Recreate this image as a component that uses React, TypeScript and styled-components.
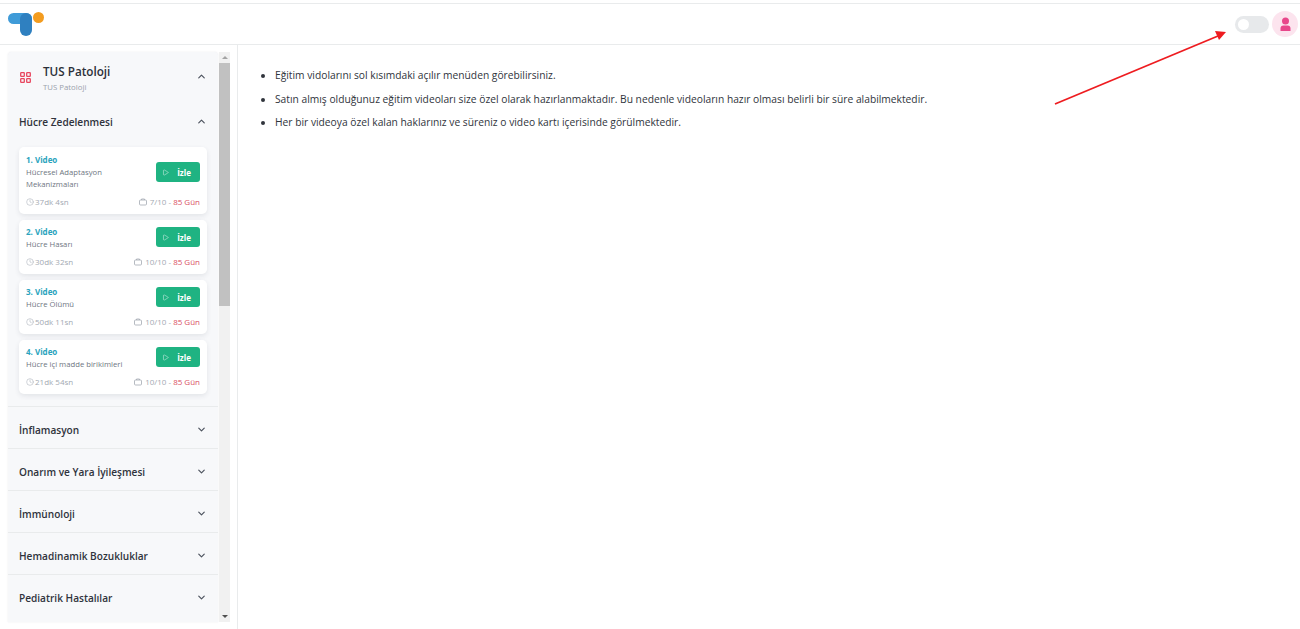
import { createGlobalStyle, styled } from 'styled-components';
import { ChevronDown, ChevronUp, Clock, Play } from 'lucide-react';

const GlobalStyle = createGlobalStyle`
  html, body {
    margin: 0;
    padding: 0;
    height: 100%;
    background: #ffffff;
    overflow: hidden;
    font-family: 'Open Sans', 'Noto Sans', sans-serif;
  }
  * {
    box-sizing: border-box;
  }
`;

const Page = styled.div`
  position: relative;
  width: 1300px;
  height: 629px;
  padding-top: 3px;
  display: flex;
  flex-direction: column;
`;

const Header = styled.header`
  height: 42px;
  flex: none;
  border-top: 1px solid #e9ebec;
  border-bottom: 1px solid #e9ebec;
  display: flex;
  align-items: center;
  justify-content: space-between;
  padding: 0 2px 0 8px;
`;

const Logo = styled.svg`
  width: 36px;
  height: 24px;
`;

const HeaderActions = styled.div`
  display: flex;
  align-items: center;
  gap: 3px;
`;

const Toggle = styled.div`
  width: 34px;
  height: 17px;
  border-radius: 9px;
  background: #e7e9eb;
  padding: 3px;
`;

const ToggleKnob = styled.div`
  width: 11px;
  height: 11px;
  border-radius: 50%;
  background: #ffffff;
`;

const Avatar = styled.div`
  width: 26px;
  height: 26px;
  border-radius: 50%;
  background: #fce4ee;
  display: flex;
  align-items: center;
  justify-content: center;
`;

const Body = styled.div`
  flex: 1;
  display: flex;
  min-height: 0;
`;

const Sidebar = styled.aside`
  width: 238px;
  flex: none;
  border-right: 1px solid #e9ebec;
  padding: 7px 6px 7px 8px;
  display: flex;
  gap: 1px;
`;

const Panel = styled.div`
  width: 210px;
  height: 100%;
  overflow: hidden;
  background: #f7f8fa;
  border-radius: 4px 4px 0 0;
  box-shadow: 0 0 2px rgba(40, 50, 70, 0.1);
`;

const CourseHead = styled.div`
  height: 51px;
  display: flex;
  align-items: flex-start;
  padding: 11px 11px 0 12px;
`;

const CourseIcon = styled.svg`
  width: 11px;
  height: 11px;
  flex: none;
  margin: 9px 12px 0 0;
`;

const CourseText = styled.div`
  flex: 1;
`;

const CourseTitle = styled.div`
  font-size: 11.7px;
  line-height: 16px;
  font-weight: 600;
  color: #2b2f38;
`;

const CourseSub = styled.div`
  font-size: 7.8px;
  line-height: 11px;
  margin-top: 3px;
  color: #9aa1ab;
`;

const SectionRow = styled.div<{ $height: number; $border?: boolean; $offset?: number }>`
  height: ${(p) => p.$height}px;
  display: flex;
  align-items: center;
  justify-content: space-between;
  padding: ${(p) => p.$offset ?? 0}px 11px 0 11px;
  font-size: 10.1px;
  font-weight: 600;
  color: #2f333c;
  border-top: ${(p) => (p.$border ? '1px solid #e9ebec' : 'none')};
`;

const Chevron = styled.span<{ $nudge?: number }>`
  color: #4d535e;
  display: flex;
  margin-top: ${(p) => p.$nudge ?? 0}px;
`;

const VideoList = styled.div`
  padding: 7px 11px 12px 11px;
  display: flex;
  flex-direction: column;
  gap: 6px;
`;

const Card = styled.div<{ $tall: boolean }>`
  height: ${(p) => (p.$tall ? 67 : 54)}px;
  background: #ffffff;
  border-radius: 5px;
  box-shadow: 0 2px 5px rgba(50, 60, 80, 0.1);
  padding: ${(p) => (p.$tall ? 7 : 6)}px 7px 0 7px;
  display: flex;
  flex-direction: column;
`;

const CardTop = styled.div`
  flex: 1;
  display: flex;
  justify-content: space-between;
  align-items: flex-start;
`;

const CardText = styled.div`
  width: 100px;
`;

const VideoNo = styled.div`
  font-size: 8px;
  line-height: 11px;
  margin-bottom: 1px;
  font-weight: 700;
  color: #2aa3bd;
`;

const VideoName = styled.div`
  font-size: 7.7px;
  line-height: 12px;
  color: #6f7682;
  white-space: nowrap;
`;

const WatchButton = styled.div<{ $tall: boolean }>`
  width: 44px;
  height: 20px;
  margin-top: ${(p) => (p.$tall ? 8 : 1)}px;
  padding-right: 3px;
  border-radius: 3px;
  background: #1fb382;
  color: #ffffff;
  display: flex;
  align-items: center;
  justify-content: center;
  gap: 8px;
  font-size: 8px;
  font-weight: 700;
`;

const CardBottom = styled.div`
  height: 17px;
  margin-bottom: 4px;
  display: flex;
  align-items: center;
  justify-content: space-between;
  font-size: 8px;
  color: #a3a9b2;
`;

const Meta = styled.span`
  display: flex;
  align-items: center;
  gap: 1px;
`;

const MetaRight = styled(Meta)`
  gap: 3px;
`;

const Days = styled.span`
  color: #d9505f;
`;

const ScrollTrack = styled.div`
  width: 11px;
  height: 100%;
  background: #f1f1f1;
  display: flex;
  flex-direction: column;
  align-items: center;
`;

const ScrollArrow = styled.div<{ $down?: boolean }>`
  height: 11px;
  flex: none;
  display: flex;
  align-items: center;
  justify-content: center;
  margin-top: ${(p) => (p.$down ? 'auto' : '0')};

  &::before {
    content: '';
    border-left: 3px solid transparent;
    border-right: 3px solid transparent;
    ${(p) => (p.$down ? 'border-top: 3px solid #505050;' : 'border-bottom: 3px solid #a3a3a3;')}
  }
`;

const ScrollThumb = styled.div`
  width: 100%;
  height: 243px;
  background: #c1c1c1;
`;

const Content = styled.main`
  flex: 1;
  padding: 23px 0 0 0;
`;

const Notes = styled.ul`
  margin: 0;
  padding: 0 0 0 37px;
  list-style: disc;
  color: #30343c;
  font-size: 10.25px;
  line-height: 14px;

  li {
    margin-bottom: 9.5px;
  }
`;

const ArrowLayer = styled.svg`
  position: absolute;
  left: 1050px;
  top: 25px;
  width: 185px;
  height: 85px;
`;

const videos = [
  { no: '1. Video', name: ['Hücresel Adaptasyon', 'Mekanizmaları'], time: '37dk 4sn', left: '7/10' },
  { no: '2. Video', name: ['Hücre Hasarı'], time: '30dk 32sn', left: '10/10' },
  { no: '3. Video', name: ['Hücre Ölümü'], time: '50dk 11sn', left: '10/10' },
  { no: '4. Video', name: ['Hücre içi madde birikimleri'], time: '21dk 54sn', left: '10/10' },
];

const sections = ['İnflamasyon', 'Onarım ve Yara İyileşmesi', 'İmmünoloji', 'Hemadinamik Bozukluklar', 'Pediatrik Hastalılar'];

const notes = [
  'Eğitim vidolarını sol kısımdaki açılır menüden görebilirsiniz.',
  'Satın almış olduğunuz eğitim videoları size özel olarak hazırlanmaktadır. Bu nedenle videoların hazır olması belirli bir süre alabilmektedir.',
  'Her bir videoya özel kalan haklarınız ve süreniz o video kartı içerisinde görülmektedir.',
];

export default function App() {
  return (
    <Page>
      <GlobalStyle />
      <Header>
        <Logo viewBox="0 0 36 24">
          <circle cx="30.5" cy="5.5" r="5.5" fill="#f39c1f" />
          <rect x="0" y="1" width="24" height="11" rx="5.5" fill="#3f9bd8" />
          <rect x="12" y="1" width="12" height="23" rx="6" fill="#2f80c0" />
        </Logo>
        <HeaderActions>
          <Toggle>
            <ToggleKnob />
          </Toggle>
          <Avatar>
            <svg width="13" height="15" viewBox="0 0 13 15">
              <circle cx="6.5" cy="4" r="3.5" fill="#e8478b" />
              <path d="M1.5 14v-2.5A3 3 0 0 1 4.5 8.5h4a3 3 0 0 1 3 3V14z" fill="#e8478b" />
            </svg>
          </Avatar>
        </HeaderActions>
      </Header>
      <Body>
        <Sidebar>
          <Panel>
            <CourseHead>
              <CourseIcon viewBox="0 0 11 11" fill="none" stroke="#e8475f" strokeWidth="1.3">
                <rect x="0.7" y="0.7" width="3.6" height="3.6" rx="0.6" />
                <rect x="6.7" y="0.7" width="3.6" height="3.6" rx="0.6" />
                <rect x="0.7" y="6.7" width="3.6" height="3.6" rx="0.6" />
                <rect x="6.7" y="6.7" width="3.6" height="3.6" rx="0.6" />
              </CourseIcon>
              <CourseText>
                <CourseTitle>TUS Patoloji</CourseTitle>
                <CourseSub>TUS Patoloji</CourseSub>
              </CourseText>
              <Chevron $nudge={8}>
                <ChevronUp size={11} strokeWidth={2.6} />
              </Chevron>
            </CourseHead>
            <SectionRow $height={37}>
              Hücre Zedelenmesi
              <Chevron>
                <ChevronUp size={11} strokeWidth={2.6} />
              </Chevron>
            </SectionRow>
            <VideoList>
              {videos.map((v) => {
                const tall = v.name.length > 1;
                return (
                  <Card key={v.no} $tall={tall}>
                    <CardTop>
                      <CardText>
                        <VideoNo>{v.no}</VideoNo>
                        {v.name.map((line) => (
                          <VideoName key={line}>{line}</VideoName>
                        ))}
                      </CardText>
                      <WatchButton $tall={tall}>
                        <Play size={7} strokeWidth={1.5} />
                        İzle
                      </WatchButton>
                    </CardTop>
                    <CardBottom>
                      <Meta>
                        <Clock size={8} strokeWidth={1.5} />
                        {v.time}
                      </Meta>
                      <MetaRight>
                        <svg width="8" height="8" viewBox="0 0 8 8" fill="none" stroke="#a3a9b2" strokeWidth="0.8">
                          <rect x="0.5" y="2" width="7" height="5" rx="1" />
                          <path d="M2.5 2V1h3v1" />
                        </svg>
                        <span>
                          {v.left} - <Days>85 Gün</Days>
                        </span>
                      </MetaRight>
                    </CardBottom>
                  </Card>
                );
              })}
            </VideoList>
            {sections.map((s) => (
              <SectionRow key={s} $height={42} $border $offset={4}>
                {s}
                <Chevron>
                  <ChevronDown size={11} strokeWidth={2.6} />
                </Chevron>
              </SectionRow>
            ))}
          </Panel>
          <ScrollTrack>
            <ScrollArrow />
            <ScrollThumb />
            <ScrollArrow $down />
          </ScrollTrack>
        </Sidebar>
        <Content>
          <Notes>
            {notes.map((n) => (
              <li key={n}>{n}</li>
            ))}
          </Notes>
        </Content>
      </Body>
      <ArrowLayer viewBox="0 0 185 85">
        <line x1="5" y1="79" x2="168" y2="11" stroke="#ee1c20" strokeWidth="1.8" />
        <polygon points="176,7 165,6 169,15" fill="#ee1c20" />
      </ArrowLayer>
    </Page>
  );
}
